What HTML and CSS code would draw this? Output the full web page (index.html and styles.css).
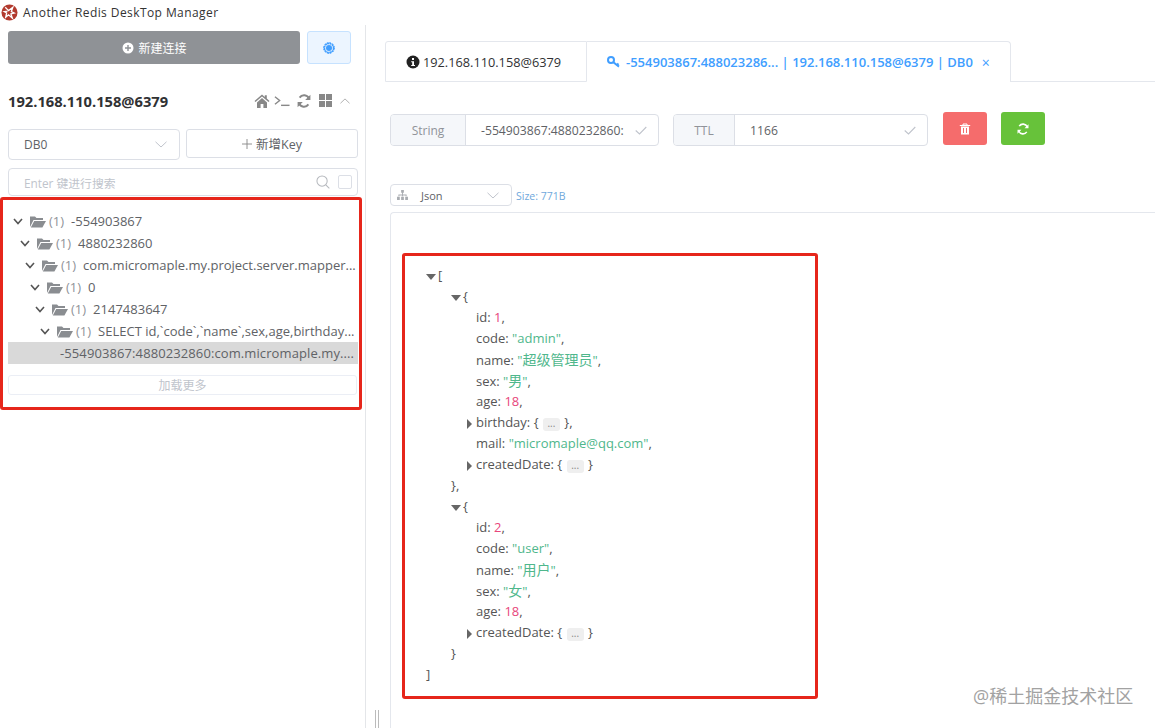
FILE: index.html
```html
<!DOCTYPE html>
<html lang="zh-CN">
<head>
<meta charset="utf-8">
<title>Another Redis DeskTop Manager</title>
<link rel="stylesheet" href="styles.css">
</head>
<body>
<header class="titlebar">
  <svg class="logo" viewBox="0 0 18 18"><circle cx="9" cy="9" r="8.5" fill="#b23a2e"/><path d="M4.5 3.5 L8 7 L12.5 3.5 L11 8 L14 9.5 L10.5 10.5 L12 15 L8 11.5 L5 14 L6 9.5 L3.5 8 L7 7.5" fill="none" stroke="#fff" stroke-width="1.4"/></svg>
  <span>Another Redis DeskTop Manager</span>
</header>
<div class="main">
  <aside class="sidebar">
    <div class="top-actions">
      <button class="new-conn"><svg class="ico14" viewBox="0 0 14 14"><circle cx="7" cy="7" r="5.5" fill="#fff"/><path d="M4 7h6M7 4v6" stroke="#8f9296" stroke-width="1.4"/></svg>新建连接</button>
      <button class="theme-btn"><svg class="ico14" viewBox="0 0 14 14"><circle cx="7" cy="7" r="4.6" fill="none" stroke="#409eff" stroke-width="1.6" stroke-dasharray="2 .4"/><circle cx="7" cy="7" r="3" fill="#409eff"/><circle cx="7" cy="7" r="5.4" fill="none" stroke="#409eff" stroke-width="1" stroke-dasharray="1.6 1.2"/></svg></button>
    </div>
    <div class="conn-head">
      <span class="conn-name">192.168.110.158@6379</span>
      <span class="conn-icons">
        <svg class="ico-home" viewBox="0 0 16 14"><path d="M8 .5 L.5 7 l1 1 L8 2.5 l6.5 5.5 l1-1 L12.8 4.6 V1.2 h-2 v1.7z M3 8.4 L8 4 l5 4.4 V14 H9.4 V10 H6.6 V14 H3z" fill="#888"/></svg>
        <svg class="ico-term" viewBox="0 0 17 12"><path d="M1 1.5 L6 5.5 L1 9.5" fill="none" stroke="#888" stroke-width="1.5"/><path d="M7.5 10.6 H16.5" stroke="#888" stroke-width="1.5"/></svg>
        <svg class="ico-sync" viewBox="0 0 14 14"><path d="M12 4.6 A5.4 5.4 0 0 0 2.6 3.6 M2 9.4 A5.4 5.4 0 0 0 11.4 10.4" fill="none" stroke="#888" stroke-width="2"/><path d="M13.4 .8 V6 H8.2z M.6 13.2 V8 H5.8z" fill="#888"/></svg>
        <svg class="ico-grid" viewBox="0 0 13 13"><path d="M0 0h6v6H0z M7 0h6v6H7z M0 7h6v6H0z M7 7h6v6H7z" fill="#888"/></svg>
        <svg class="ico-up" viewBox="0 0 11 6"><path d="M.5 5.5 L5.5 .7 L10.5 5.5" fill="none" stroke="#aaa" stroke-width="1"/></svg>
      </span>
    </div>
    <div class="db-row">
      <div class="db-select"><span>DB0</span><svg class="chev" viewBox="0 0 12 7"><path d="M.5 .8 L6 6 L11.5 .8" fill="none" stroke="#c0c4cc" stroke-width="1"/></svg></div>
      <button class="new-key"><svg class="plus" viewBox="0 0 11 11"><path d="M0 5.5H11M5.5 0V11" stroke="#888" stroke-width="1"/></svg>新增Key</button>
    </div>
    <div class="search">
      <span class="placeholder">Enter 键进行搜索</span>
      <svg class="ico-search" viewBox="0 0 15 15"><circle cx="6.5" cy="6.5" r="5.5" fill="none" stroke="#b5b8bd" stroke-width="1.1"/><path d="M10.5 10.5 L14.3 14.3" stroke="#b5b8bd" stroke-width="1.1"/></svg>
      <span class="checkbox"></span>
    </div>
    <ul class="tree">
      <li class="node d1"><svg class="caret" viewBox="0 0 10 7"><path d="M1 1 L5 5.5 L9 1" fill="none" stroke="#555" stroke-width="1.6"/></svg><svg class="folder" viewBox="0 0 16 13"><path d="M0 12 V1.5 H5 L6.5 3 H13 V5 H3.5z" fill="#8a8d91"/><path d="M4.2 6 H16 L12.4 12.5 H.8z" fill="#8a8d91"/></svg><span class="count">(1)</span><span>-554903867</span></li>
      <li class="node d2"><svg class="caret" viewBox="0 0 10 7"><path d="M1 1 L5 5.5 L9 1" fill="none" stroke="#555" stroke-width="1.6"/></svg><svg class="folder" viewBox="0 0 16 13"><path d="M0 12 V1.5 H5 L6.5 3 H13 V5 H3.5z" fill="#8a8d91"/><path d="M4.2 6 H16 L12.4 12.5 H.8z" fill="#8a8d91"/></svg><span class="count">(1)</span><span>4880232860</span></li>
      <li class="node d3"><svg class="caret" viewBox="0 0 10 7"><path d="M1 1 L5 5.5 L9 1" fill="none" stroke="#555" stroke-width="1.6"/></svg><svg class="folder" viewBox="0 0 16 13"><path d="M0 12 V1.5 H5 L6.5 3 H13 V5 H3.5z" fill="#8a8d91"/><path d="M4.2 6 H16 L12.4 12.5 H.8z" fill="#8a8d91"/></svg><span class="count">(1)</span><span>com.micromaple.my.project.server.mapper...</span></li>
      <li class="node d4"><svg class="caret" viewBox="0 0 10 7"><path d="M1 1 L5 5.5 L9 1" fill="none" stroke="#555" stroke-width="1.6"/></svg><svg class="folder" viewBox="0 0 16 13"><path d="M0 12 V1.5 H5 L6.5 3 H13 V5 H3.5z" fill="#8a8d91"/><path d="M4.2 6 H16 L12.4 12.5 H.8z" fill="#8a8d91"/></svg><span class="count">(1)</span><span>0</span></li>
      <li class="node d5"><svg class="caret" viewBox="0 0 10 7"><path d="M1 1 L5 5.5 L9 1" fill="none" stroke="#555" stroke-width="1.6"/></svg><svg class="folder" viewBox="0 0 16 13"><path d="M0 12 V1.5 H5 L6.5 3 H13 V5 H3.5z" fill="#8a8d91"/><path d="M4.2 6 H16 L12.4 12.5 H.8z" fill="#8a8d91"/></svg><span class="count">(1)</span><span>2147483647</span></li>
      <li class="node d6"><svg class="caret" viewBox="0 0 10 7"><path d="M1 1 L5 5.5 L9 1" fill="none" stroke="#555" stroke-width="1.6"/></svg><svg class="folder" viewBox="0 0 16 13"><path d="M0 12 V1.5 H5 L6.5 3 H13 V5 H3.5z" fill="#8a8d91"/><path d="M4.2 6 H16 L12.4 12.5 H.8z" fill="#8a8d91"/></svg><span class="count">(1)</span><span>SELECT id,`code`,`name`,sex,age,birthday...</span></li>
      <li class="node leaf selected">-554903867:4880232860:com.micromaple.my....</li>
    </ul>
    <button class="load-more">加载更多</button>
  </aside>
  <section class="content">
    <nav class="tabs">
      <div class="tab tab-info"><svg class="ico14" viewBox="0 0 14 14"><circle cx="7" cy="7" r="6.5" fill="#222"/><path d="M6 3h2v2H6z M5.2 6.2H8V10h1v1H5.2v-1h1V7.2h-1z" fill="#fff"/></svg>192.168.110.158@6379</div>
      <div class="tab tab-key"><svg class="ico-key" viewBox="0 0 14 12"><circle cx="4" cy="4" r="3" fill="none" stroke="#409eff" stroke-width="2"/><path d="M6 6 L12 10.6 M10 9 L11.5 7.5" fill="none" stroke="#409eff" stroke-width="2"/></svg><span class="tab-title">-554903867:488023286... | 192.168.110.158@6379 | DB0</span><span class="tab-close">×</span></div>
      <div class="tabs-rest"></div>
    </nav>
    <div class="panel">
      <div class="key-row">
        <div class="group group-key"><span class="addon addon-type">String</span><span class="field"><span class="field-text">-554903867:4880232860:</span><svg class="tick" viewBox="0 0 12 9"><path d="M.7 4.5 L4.5 8 L11.3 1" fill="none" stroke="#c0c4cc" stroke-width="1.1"/></svg></span></div>
        <div class="group group-ttl"><span class="addon addon-ttl">TTL</span><span class="field"><span class="field-text">1166</span><svg class="tick" viewBox="0 0 12 9"><path d="M.7 4.5 L4.5 8 L11.3 1" fill="none" stroke="#c0c4cc" stroke-width="1.1"/></svg></span></div>
        <button class="act act-del"><svg class="ico-act" viewBox="0 0 12 12"><path d="M.8 2.5h10.4 M4 2.5 V1h4v1.5" fill="none" stroke="#fff" stroke-width="1"/><path d="M2 3.5h8V11.5H2z M4 5v5h1V5z M7 5v5h1V5z" fill="#fff" fill-rule="evenodd"/></svg></button>
        <button class="act act-ref"><svg class="ico-act" viewBox="0 0 14 14"><path d="M12 4.6 A5.4 5.4 0 0 0 2.6 3.6 M2 9.4 A5.4 5.4 0 0 0 11.4 10.4" fill="none" stroke="#fff" stroke-width="1.8"/><path d="M13.4 1.4 V6 H8.8z M.6 12.6 V8 H5.2z" fill="#fff"/></svg></button>
      </div>
      <div class="format-row">
        <div class="format-select"><svg class="ico-map" viewBox="0 0 12 11"><path d="M4.5 0h3v3h-3z M5.5 3h1v2h4v2h-1V6h-3v1h-1V6h-3v1h-1V5h4z M0 7.5h3V11H0z M4.5 7.5h3V11h-3z M9 7.5h3V11H9z" fill="#a9acb1"/></svg><span>Json</span><svg class="chev" viewBox="0 0 12 7"><path d="M.5 .8 L6 6 L11.5 .8" fill="none" stroke="#c0c4cc" stroke-width="1"/></svg></div>
        <span class="size">Size: 771B</span>
      </div>
      <div class="editor">
        <div class="jl l0"><i class="arr-d"></i>[</div>
        <div class="jl l1"><i class="arr-d"></i>{</div>
        <div class="jl l2">id: <b class="num">1</b>,</div>
        <div class="jl l2">code: <b class="str">"admin"</b>,</div>
        <div class="jl l2">name: <b class="str">"<span class="cjk">超级管理员</span>"</b>,</div>
        <div class="jl l2">sex: <b class="str">"<span class="cjk">男</span>"</b>,</div>
        <div class="jl l2">age: <b class="num">18</b>,</div>
        <div class="jl l2"><i class="arr-r"></i>birthday: { <em class="more">...</em> },</div>
        <div class="jl l2">mail: <b class="str">"micromaple@qq.com"</b>,</div>
        <div class="jl l2"><i class="arr-r"></i>createdDate: { <em class="more">...</em> }</div>
        <div class="jl c1">},</div>
        <div class="jl l1"><i class="arr-d"></i>{</div>
        <div class="jl l2">id: <b class="num">2</b>,</div>
        <div class="jl l2">code: <b class="str">"user"</b>,</div>
        <div class="jl l2">name: <b class="str">"<span class="cjk">用户</span>"</b>,</div>
        <div class="jl l2">sex: <b class="str">"<span class="cjk">女</span>"</b>,</div>
        <div class="jl l2">age: <b class="num">18</b>,</div>
        <div class="jl l2"><i class="arr-r"></i>createdDate: { <em class="more">...</em> }</div>
        <div class="jl c1">}</div>
        <div class="jl c0">]</div>
      </div>
    </div>
  </section>
</div>
<div class="splitter"></div>
<div class="mark mark-tree"></div>
<div class="mark mark-json"></div>
<div class="watermark">@稀土掘金技术社区</div>
</body>
</html>
```

FILE: styles.css
```css
* { box-sizing: border-box; }
html, body { margin: 0; height: 100%; overflow: hidden; background: #fff; }
body {
  font-family: "Open Sans", "Noto Sans CJK SC", sans-serif;
  font-size: 12px;
  color: #606266;
  position: relative;
}
button { font-family: inherit; cursor: pointer; padding: 0; }
ul { list-style: none; margin: 0; padding: 0; }
svg { display: block; flex: none; }
.ico14 { width: 14px; height: 14px; }

.titlebar { height: 25px; display: flex; align-items: center; gap: 5px; padding-left: 1px; color: #333; font-size: 12px; letter-spacing: .42px; }
.logo { width: 17px; height: 17px; }

.main { display: flex; height: 703px; }
.sidebar { width: 366px; flex: none; padding: 6px 7px 0 8px; border-right: 1px solid #e4e6e9; }
.top-actions { display: flex; gap: 7px; }
.new-conn { width: 292px; height: 33px; background: #8f9296; border: 0; border-radius: 3px; color: #fff; font-size: 12px; display: flex; align-items: center; justify-content: center; gap: 3px; }
.theme-btn { width: 44px; height: 33px; background: #ecf5ff; border: 1px solid #c6e2ff; border-radius: 3px; display: flex; align-items: center; justify-content: center; }

.conn-head { height: 28px; margin-top: 23px; display: flex; align-items: center; justify-content: space-between; padding-right: 8px; }
.conn-name { font-weight: 700; font-size: 14.7px; color: #303133; }
.conn-icons { display: flex; align-items: center; margin-bottom: 1px; }
.ico-home { width: 16px; height: 14px; }
.ico-term { width: 16px; height: 12px; margin-left: 4px; }
.ico-sync { width: 14px; height: 14px; margin-left: 7px; }
.ico-grid { width: 13px; height: 13px; margin-left: 8px; }
.ico-up { width: 10px; height: 6px; margin-left: 8px; }

.db-row { display: flex; gap: 6px; margin-top: 14px; align-items: flex-start; }
.db-select { width: 172px; height: 31px; border: 1px solid #dcdfe6; border-radius: 4px; display: flex; align-items: center; justify-content: space-between; padding: 0 12px 0 15px; font-size: 12px; color: #606266; }
.chev { width: 12px; height: 7px; }
.new-key { width: 172px; height: 29px; background: #fff; border: 1px solid #dcdfe6; border-radius: 3px; color: #606266; font-size: 12.5px; display: flex; align-items: center; justify-content: center; }
.plus { width: 10px; height: 10px; margin-right: 4px; }

.search { height: 28px; margin-top: 8px; border: 1px solid #dcdfe6; border-radius: 4px; display: flex; align-items: center; padding: 0 5px 0 15px; }
.placeholder { flex: 1; color: #c0c4cc; font-size: 11.8px; }
.ico-search { width: 14px; height: 14px; margin-right: 8px; }
.checkbox { width: 14px; height: 14px; border: 1px solid #dcdfe6; border-radius: 2px; }

.tree { margin-top: 14px; }
.node { height: 22px; display: flex; align-items: center; white-space: nowrap; color: #606266; font-size: 13px; }
.caret { width: 10px; height: 7px; margin-right: 7px; }
.folder { width: 16px; height: 13px; margin-right: 3px; }
.count { color: #909399; margin-right: 7px; }
.d1 { padding-left: 5px; }
.d2 { padding-left: 12px; }
.d3 { padding-left: 17px; }
.d4 { padding-left: 22px; }
.d5 { padding-left: 27px; }
.d6 { padding-left: 32px; }
.leaf { padding-left: 52px; letter-spacing: .1px; }
.selected { background: #d9d9d9; }
.load-more { display: block; width: 349px; height: 20px; margin-top: 11px; background: #fff; border: 1px solid #ebeef5; border-radius: 3px; color: #c0c4cc; font-size: 12px; }

.content { flex: 1; min-width: 0; padding-left: 19px; }
.tabs { display: flex; margin-top: 16px; height: 41px; }
.tab { height: 41px; display: flex; align-items: center; border: 1px solid #e4e7ed; }
.tab-info { width: 202px; justify-content: center; gap: 3px; padding-right: 5px; color: #303133; font-size: 12.75px; border-top-left-radius: 3px; }
.tab-key { width: 424px; border-left: 0; border-bottom: 0; padding-left: 20px; color: #409eff; font-size: 13px; font-weight: 600; border-top-right-radius: 4px; }
.ico-key { width: 14px; height: 12px; margin-right: 5px; }
.tab-close { font-size: 14px; font-weight: 400; margin-left: 9px; }
.tabs-rest { flex: 1; border-bottom: 1px solid #e4e7ed; }

.panel { padding-left: 5px; }
.key-row { display: flex; align-items: flex-start; margin-top: 30px; height: 34px; }
.group { height: 32px; margin-top: 2px; border: 1px solid #dcdfe6; border-radius: 4px; display: flex; overflow: hidden; }
.group-key { width: 269px; }
.group-ttl { width: 255px; margin-left: 14px; }
.addon { background: #f5f7fa; border-right: 1px solid #dcdfe6; color: #909399; display: flex; align-items: center; justify-content: center; }
.addon-type { width: 75px; }
.addon-ttl { width: 61px; }
.field { flex: 1; min-width: 0; display: flex; align-items: center; padding: 0 11px 0 15px; color: #606266; font-size: 12.2px; }
.field-text { flex: 1; min-width: 0; white-space: nowrap; }
.tick { width: 12px; height: 9px; margin-left: 8px; }
.act { width: 44px; height: 33px; border: 0; border-radius: 3px; display: flex; align-items: center; justify-content: center; }
.act-del { background: #f56c6c; margin-left: 15px; }
.act-ref { background: #67c23a; margin-left: 14px; }
.ico-act { width: 12px; height: 12px; }

.format-row { display: flex; align-items: center; margin-top: 38px; gap: 4px; }
.format-select { width: 122px; height: 22px; border: 1px solid #dcdfe6; border-radius: 4px; display: flex; align-items: center; padding: 0 12px 0 6px; font-size: 11px; color: #606266; }
.format-select span { flex: 1; padding-left: 13px; }
.ico-map { width: 11px; height: 10px; }
.size { color: #6fa8dc; font-size: 10.5px; padding-top: 1px; }

.editor { margin-top: 6px; height: 520px; border-top: 1px solid #e4e7ed; border-left: 1px solid #e4e7ed; border-top-left-radius: 4px; padding-top: 52px; }
.jl { height: 21px; line-height: 21px; font-size: 13px; color: #555; white-space: nowrap; position: relative; }
.l0 { padding-left: 47px; }
.l1 { padding-left: 72px; }
.l2 { padding-left: 85px; }
.c1 { padding-left: 60px; }
.c0 { padding-left: 35px; }
.jl b { font-weight: 400; }
.cjk { font-size: 14px; }
.num { color: #e8467c; }
.str { color: #4fb78c; }
.arr-d, .arr-r { display: inline-block; width: 0; height: 0; vertical-align: middle; border-style: solid; }
.arr-d { border-width: 6px 5px 0; border-color: #666 transparent transparent; margin-left: -12px; margin-right: 2px; }
.arr-r { border-width: 5px 0 5px 5px; border-color: transparent transparent transparent #666; margin-left: -9px; margin-right: 4px; }
.more { display: inline-block; font-style: normal; background: #efefef; border-radius: 3px; width: 17px; height: 13px; line-height: 10px; text-align: center; font-size: 10px; color: #888; vertical-align: 0; margin: 0 1px; }

.splitter { position: absolute; left: 375px; top: 710px; width: 4px; height: 18px; border-left: 1px solid #bbb; border-right: 1px solid #bbb; }
.mark { position: absolute; border: 3px solid #e6261b; border-radius: 3px; pointer-events: none; }
.mark-tree { left: 0; top: 197px; width: 362px; height: 213px; }
.mark-json { left: 402px; top: 253px; width: 416px; height: 446px; }
.watermark { position: absolute; left: 973px; top: 685px; font-size: 18px; color: #a2a2a2; line-height: 22px; }
```
